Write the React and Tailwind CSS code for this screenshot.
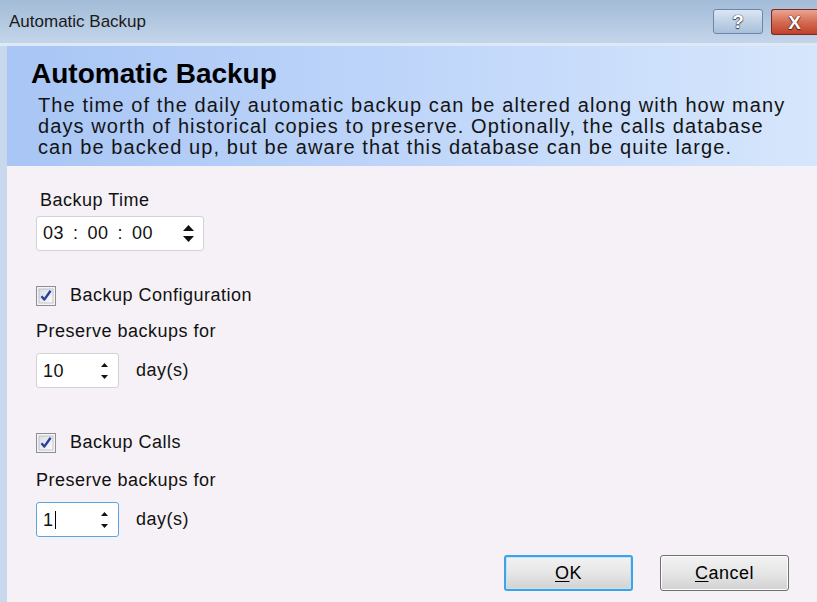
import React from 'react';

const font = "font-['Liberation_Sans',Arial,sans-serif]";

function Spin({ big }) {
  if (big) {
    return (
      <svg width="11" height="17" viewBox="0 0 11 17" className="shrink-0">
        <polygon points="0,6 5.5,0 11,6" fill="#111" />
        <polygon points="0,11 11,11 5.5,17" fill="#111" />
      </svg>
    );
  }
  return (
    <svg width="9" height="18" viewBox="0 0 9 18" className="shrink-0">
      <polygon points="1,5 4.5,1 8,5" fill="#111" />
      <polygon points="1,13 8,13 4.5,17" fill="#111" />
    </svg>
  );
}

function CheckBox() {
  return (
    <svg width="20" height="20" viewBox="0 0 20 20" className="shrink-0">
      <defs>
        <linearGradient id="cbfill" x1="0" y1="0" x2="1" y2="1">
          <stop offset="0" stopColor="#d9dde4" />
          <stop offset="1" stopColor="#fafbfc" />
        </linearGradient>
      </defs>
      <rect x="0.5" y="0.5" width="19" height="19" fill="#f4f4f4" stroke="#8e8f8f" />
      <rect x="3" y="3" width="14" height="14" fill="url(#cbfill)" stroke="#b5b9c0" strokeWidth="0.8" />
      <path d="M5.5 10.2 L8.3 13.6 L14.6 4.8" fill="none" stroke="#2b3f9c" strokeWidth="2.4" strokeLinejoin="round" />
    </svg>
  );
}

function NumBox({ value, focused }) {
  return (
    <div
      className={`w-[83px] h-[35px] bg-white rounded-[3px] border flex items-center pl-[6px] pr-[9px] ${
        focused ? 'border-[#5fa4e2]' : 'border-[#d3d1d9]'
      }`}
    >
      <span className="text-[18px] leading-none">{value}</span>
      {focused && <span className="w-px h-[18px] bg-black ml-px" />}
      <span className="ml-auto">
        <Spin />
      </span>
    </div>
  );
}

function Button({ children, primary }) {
  return (
    <button
      className={`w-[129px] h-[36px] rounded-[3px] text-[18px] text-black bg-gradient-to-b from-[#f2f2f2] via-[#e6e6e6] to-[#d2d2d2] ${
        primary ? 'border-2 border-[#3ea3e3] shadow-[inset_0_0_0_1px_#bfe4f9]' : 'border border-[#707070] shadow-[inset_0_0_0_1px_#fcfcfc]'
      }`}
    >
      {children}
    </button>
  );
}

export default function App() {
  return (
    <div className={`w-[817px] h-[602px] bg-[#c8d9ed] flex flex-col overflow-hidden text-[#111] ${font}`}>
      {/* title bar */}
      <div className="h-[43px] shrink-0 bg-gradient-to-b from-[#a2bbd7] to-[#c3d5ea] flex items-start pl-[9px]">
        <span className="text-[17px] mt-[9px] text-[#1a1a1a]">Automatic Backup</span>
        <div className="ml-auto flex gap-[8px] mt-[9px]">
          <div className="w-[50px] h-[25px] rounded-[3px] border border-[#6f87a6] bg-gradient-to-b from-[#dbe6f3] via-[#c0d2e7] to-[#a9c0db] flex items-center justify-center">
            <span className="text-[19px] font-bold text-white leading-none [text-shadow:0_0_1px_#334,0_0_1px_#334,0_1px_1px_#334]">?</span>
          </div>
          <div className="w-[46px] h-[26px] rounded-l-[3px] border border-r-0 border-[#7b2a1f] bg-gradient-to-b from-[#e8a593] via-[#d46a52] to-[#c0412b] flex items-center justify-center">
            <span className="text-[19px] font-bold text-white leading-none [text-shadow:0_0_1px_#4a1a12,0_0_1px_#4a1a12,0_1px_1px_#4a1a12]">X</span>
          </div>
        </div>
      </div>
      <div className="h-[3px] shrink-0 bg-[#dfe9f5]" />

      <div className="flex-1 ml-[7px] flex flex-col">
        {/* heading panel */}
        <div className="h-[120px] shrink-0 bg-gradient-to-r from-[#a8c5f4] via-[#bfd6fa] to-[#d6e6fc] pl-[24px] pt-[13px]">
          <h1 className="text-[28px] leading-[30px] font-bold text-black">Automatic Backup</h1>
          <p className="mt-[6px] ml-[7px] text-[20px] leading-[21px] tracking-[1.1px] text-[#141414]">
            The time of the daily automatic backup can be altered along with how many
            <br />
            days worth of historical copies to preserve. Optionally, the calls database
            <br />
            can be backed up, but be aware that this database can be quite large.
          </p>
        </div>

        {/* options */}
        <div className="flex-1 bg-[#f5f1f6] pl-[29px] pt-[24px] flex flex-col text-[18px] leading-[21px] tracking-[0.5px]">
          <div className="pl-[4px]">Backup Time</div>
          <div className="mt-[5px] w-[168px] h-[35px] bg-white rounded-[3px] border border-[#d3d1d9] flex items-center pl-[6px] pr-[9px]">
            <span>03</span>
            <span className="mx-[9px]">:</span>
            <span>00</span>
            <span className="mx-[9px]">:</span>
            <span>00</span>
            <span className="ml-auto">
              <Spin big />
            </span>
          </div>

          <div className="mt-[34px] flex items-center gap-[14px]">
            <CheckBox />
            <span>Backup Configuration</span>
          </div>
          <div className="mt-[15px]">Preserve backups for</div>
          <div className="mt-[11px] flex items-center gap-[17px]">
            <NumBox value="10" />
            <span>day(s)</span>
          </div>

          <div className="mt-[44px] flex items-center gap-[14px]">
            <CheckBox />
            <span>Backup Calls</span>
          </div>
          <div className="mt-[17px]">Preserve backups for</div>
          <div className="mt-[11px] flex items-center gap-[17px]">
            <NumBox value="1" focused />
            <span>day(s)</span>
          </div>

          <div className="mt-[18px] flex justify-end gap-[27px] pr-[28px]">
            <Button primary>
              <span className="underline underline-offset-2">O</span>K
            </Button>
            <Button>
              <span className="underline underline-offset-2">C</span>ancel
            </Button>
          </div>
        </div>
      </div>
    </div>
  );
}
